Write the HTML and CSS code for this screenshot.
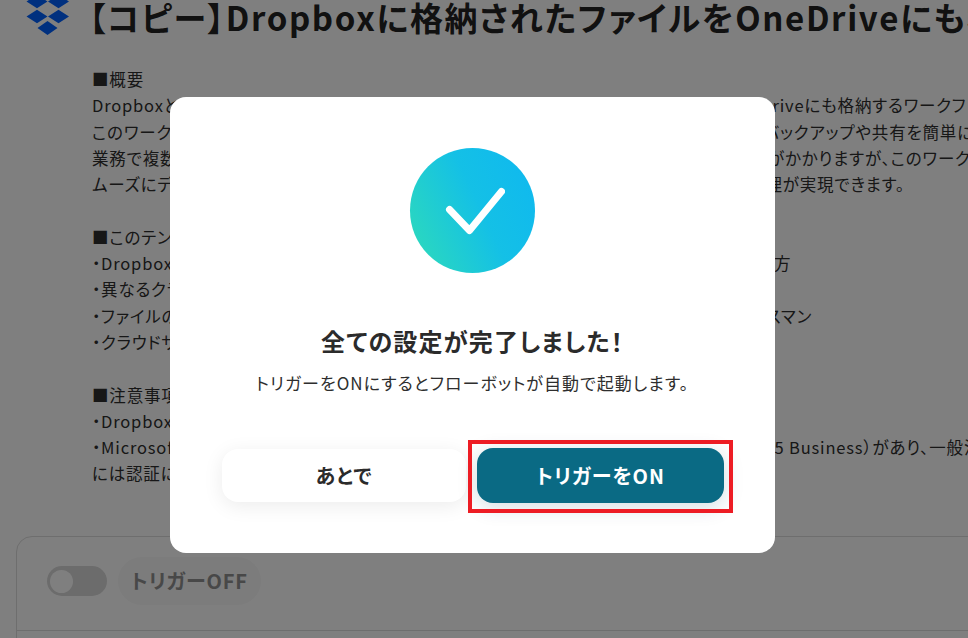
FILE: index.html
```html
<!DOCTYPE html>
<html lang="ja">
<head>
    <meta charset="utf-8">
    <title>トリガー設定</title>
    <link rel="stylesheet" href="styles.css">
</head>
<body>
    <div class="page">
        <div class="title-row">
            <svg class="app-logo" viewBox="0 0 44 41" aria-hidden="true">
                <path d="M11 .8 21.500 7.500 11 14.200 .5 7.500zM32.500 .8 43 7.500 32.500 14.200 22 7.500zM11 15.800 21.500 22.500 11 29.200 .5 22.500zM32.500 15.800 43 22.500 32.500 29.200 22 22.500zM21.500 27 31.500 34 21.500 41 11.500 34z"/>
            </svg>
            <h1>【コピー】Dropboxに格納されたファイルをOneDriveにも格納する</h1>
        </div>
        <div class="description">
            <p>■概要</p>
            <p>DropboxとOneDriveを連携し、Dropbox指定フォルダに格納されたファイルを自動でOneDriveにも格納するワークフローです。</p>
            <p>このワークフローを活用することで、Dropboxファイルを自動で同期し、管理を一元化しつつバックアップや共有を簡単に行えます。</p>
            <p>業務で複数のクラウドサービスを使い分けている場合は、手動での移行作業には手間と時間がかかりますが、このワークフローならス</p>
            <p>ムーズにデータを連携でき、チーム全体での情報共有も円滑になり、より効率的なファイル管理が実現できます。</p>
            <p class="blank">&nbsp;</p>
            <p>■このテンプレートをおすすめする方</p>
            <p>・DropboxとOneDriveの両方を日常業務で利用していて、連携を検討している企業や個人の方</p>
            <p>・異なるクラウドストレージ間でのファイル共有に課題を感じている方</p>
            <p>・ファイルのバックアップを自動化して日々の業務の全体を効率化したいと考えているビジネスマン</p>
            <p>・クラウドサービスの連携に興味がある情報システム部門の担当者</p>
            <p class="blank">&nbsp;</p>
            <p>■注意事項</p>
            <p>・Dropbox、OneDriveのそれぞれとYoomを連携してください。</p>
            <p>・Microsoft365（旧Office365）には、家庭向けプランと一般の法人向けプラン（Microsoft365 Business）があり、一般法人向けプランに加入していない場合</p>
            <p>には認証に失敗する可能性があります。</p>
        </div>
        <div class="trigger-card">
            <div class="trigger-head">
                <span class="toggle"><span class="toggle-knob"></span></span>
                <span class="trigger-label">トリガーOFF</span>
            </div>
        </div>
    </div>

    <div class="overlay">
        <div class="modal">
            <div class="check-circle">
                <svg viewBox="0 0 64 52" aria-hidden="true">
                    <path d="M8.500 24.500 28.500 45.500 60.500 6.500"/>
                </svg>
            </div>
            <h2>全ての設定が完了しました！</h2>
            <p class="modal-text">トリガーをONにするとフローボットが自動で起動します。</p>
            <div class="modal-actions">
                <button class="btn btn-later" type="button">あとで</button>
                <div class="highlight-wrap">
                    <button class="btn btn-on" type="button">トリガーをON</button>
                    <span class="highlight"></span>
                </div>
            </div>
        </div>
    </div>
</body>
</html>
```

FILE: styles.css
```css
html, body {
    height: 100%;
    margin: 0;
    overflow: hidden;
}

body {
    font-family: "Noto Sans CJK JP", "Noto Sans", sans-serif;
    font-feature-settings: "palt";
    color: #2e2e2e;
    background-color: #fff;
}

.page {
    width: 1300px;
    margin-top: -6px;
}

.title-row {
    display: flex;
    align-items: flex-start;
    gap: 19px;
    padding-left: 26px;
}

.app-logo {
    width: 44px;
    height: 41px;
    flex-shrink: 0;
    fill: #0061fe;
}

.title-row h1 {
    margin: 0;
    font-size: 33px;
    line-height: 46px;
    font-weight: 700;
    letter-spacing: 0.05em;
    white-space: nowrap;
    color: #222;
}

.description {
    margin-top: 26px;
    padding-left: 92px;
    font-size: 16.500px;
    line-height: 26.300px;
    letter-spacing: 0.05em;
}

.description p {
    margin: 0;
    white-space: nowrap;
}

.trigger-card {
    margin: 49px 0 0 16px;
    border: 1px solid #dcdcdc;
    border-radius: 16px;
    height: 140px;
}

.trigger-head {
    display: flex;
    align-items: center;
    gap: 11px;
    height: 94px;
    box-sizing: border-box;
    padding: 0 0 4px 30px;
    border-bottom: 1px solid #dcdcdc;
}

.toggle {
    display: flex;
    align-items: center;
    width: 60px;
    height: 30px;
    padding: 0 3px;
    box-sizing: border-box;
    border-radius: 15px;
    background-color: #d8d8d8;
}

.toggle-knob {
    width: 23px;
    height: 23px;
    border-radius: 50%;
    background-color: #fff;
}

.trigger-label {
    padding: 9px 13px;
    border-radius: 24px;
    background-color: #f8f8f8;
    font-size: 20px;
    line-height: 30px;
    font-weight: 700;
    letter-spacing: 0.04em;
    color: #909090;
}

.overlay {
    position: fixed;
    top: 0;
    left: 0;
    right: 0;
    bottom: 0;
    background-color: rgba(0, 0, 0, 0.5);
}

.modal {
    position: absolute;
    top: 97px;
    left: 170px;
    width: 605px;
    height: 456px;
    box-sizing: border-box;
    padding-top: 51px;
    border-radius: 16px;
    background-color: #fff;
    text-align: center;
}

.check-circle {
    display: flex;
    align-items: center;
    justify-content: center;
    width: 125px;
    height: 125px;
    margin: 0 auto;
    border-radius: 50%;
    background: linear-gradient(65deg, #2fdcb8 0%, #14c0e6 55%, #0fb8f0 100%);
}

.check-circle svg {
    width: 64px;
    height: 52px;
    fill: none;
    stroke: #fff;
    stroke-width: 7;
    stroke-linecap: round;
    stroke-linejoin: round;
}

.modal h2 {
    margin: 50px 0 0;
    font-size: 24px;
    line-height: 36px;
    font-weight: 700;
    letter-spacing: 0.05em;
    color: #2b2b2b;
}

.modal-text {
    margin: 12px 0 0;
    font-size: 17px;
    line-height: 24px;
    letter-spacing: 0.06em;
    color: #2e2e2e;
}

.modal-actions {
    display: flex;
    align-items: center;
    gap: 11px;
    margin: 53px 0 0 52px;
}

.btn {
    border: 0;
    border-radius: 16px;
    font-family: inherit;
    font-feature-settings: inherit;
    font-size: 20px;
    font-weight: 700;
    letter-spacing: 0.05em;
}

.btn-later {
    width: 244px;
    height: 53px;
    background-color: #fff;
    color: #2b2b2b;
    box-shadow: 0 4px 20px rgba(0, 0, 0, 0.08);
}

.highlight-wrap {
    position: relative;
}

.btn-on {
    display: block;
    width: 247px;
    height: 55px;
    background-color: #0a6a84;
    color: #fff;
    box-shadow: 0 4px 20px rgba(10, 60, 90, 0.18);
}

.highlight {
    position: absolute;
    top: -8px;
    left: -9px;
    right: -9px;
    bottom: -10px;
    border: 4px solid #ed1c24;
}
```
